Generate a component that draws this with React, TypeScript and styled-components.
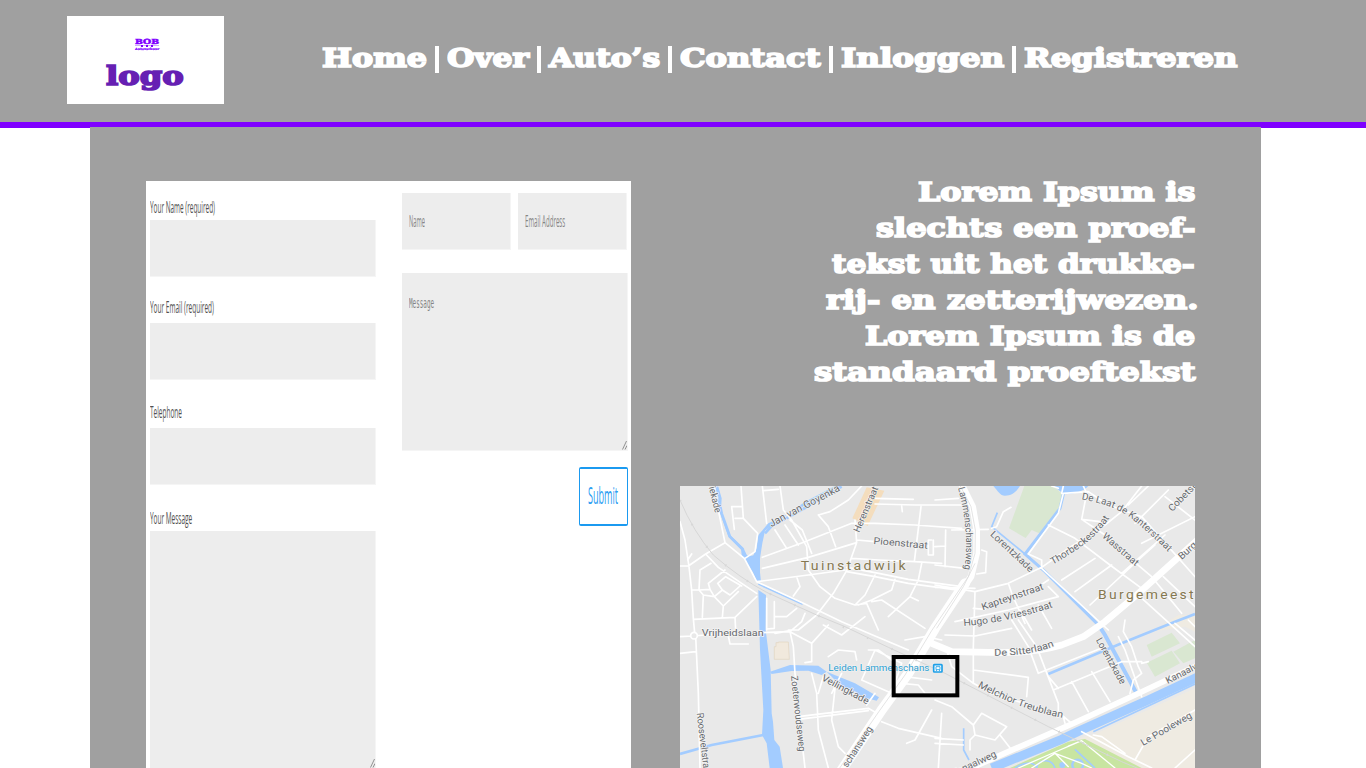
import React, { useLayoutEffect, useRef, useState } from "react";
import styled, { createGlobalStyle } from "styled-components";

const GlobalStyle = createGlobalStyle`
  * { box-sizing: border-box; }
  body { margin: 0; background: #fff; overflow: hidden; }
`;

const slab = `"Rockwell Extra Bold", "DejaVu Serif", serif`;

const Page = styled.div`
  height: 768px;
  overflow: hidden;
  display: flex;
  flex-direction: column;
  background: #fff;
`;

const Header = styled.header`
  flex: none;
  height: 128px;
  display: flex;
  align-items: flex-start;
  padding: 16px 0 0 67px;
  background: #a0a0a0;
  border-bottom: 6px solid #7f00ff;
`;

const Logo = styled.div`
  width: 157px;
  height: 88px;
  padding-top: 21px;
  display: flex;
  flex-direction: column;
  align-items: center;
  background: #fff;
  color: #7f00ff;
  font-family: ${slab};
  font-weight: bold;
`;

const LogoMark = styled.div`
  width: 24px;
  height: 22px;
  margin-left: 3px;
  font-size: 7px;
  line-height: 9px;
  -webkit-text-stroke: 0.5px #7f00ff;
`;

const LogoRule = styled.div`
  display: flex;
  justify-content: center;
  gap: 3px;
  height: 2px;
  margin-top: -1px;
  background: linear-gradient(#cfa8ff, #cfa8ff) 0 0 / 100% 1px no-repeat;
  i { width: 2px; height: 2px; background: #7f00ff; }
`;

const LogoTag = styled.div`
  height: 4px;
  font-size: 3px;
  line-height: 4px;
  -webkit-text-stroke: 0.2px #7f00ff;
`;

const LogoWord = styled.div`
  height: 36px;
  margin: -1px 1px 0 0;
  font-size: 26px;
  line-height: 36px;
  color: #661fb3;
  -webkit-text-stroke: 1.7px #661fb3;
`;

const Nav = styled.nav`
  display: flex;
  gap: 8px;
  margin: 24px 0 0 98px;
  color: #fff;
  font: bold 26px/36px ${slab};
  -webkit-text-stroke: 1.7px #fff;
`;

const Divider = styled.i`
  width: 4px;
  height: 27px;
  margin-top: 6px;
  background: #fff;
`;

const Main = styled.main`
  flex: none;
  position: relative;
  width: 1171px;
  height: 900px;
  margin: -1px 0 0 90px;
  padding: 54px 66px 0 56px;
  display: flex;
  align-items: flex-start;
  justify-content: space-between;
  background: #a0a0a0;
`;

const FormCard = styled.form`
  width: 485px;
  height: 700px;
  padding: 0 3px 0 4px;
  display: flex;
  justify-content: space-between;
  background: #fff;
  font-family: "Open Sans", "Noto Sans", sans-serif;
`;

const Column = styled.div<{ $top: number }>`
  width: 226px;
  padding-top: ${(p) => p.$top}px;
`;

const Label = styled.div<{ $before?: number; $after: number }>`
  height: 22px;
  margin: ${(p) => p.$before ?? 0}px 0 ${(p) => p.$after}px;
  font-size: 16px;
  line-height: 22px;
  color: #505050;
`;

const Field = styled.div<{ $h?: number; $w?: number; $pad?: number }>`
  position: relative;
  width: ${(p) => (p.$w ? `${p.$w}px` : "100%")};
  height: ${(p) => p.$h ?? 57}px;
  padding: ${(p) => p.$pad ?? 17}px 7px 0;
  background: #ededed;
  border: solid #f5f5f5;
  border-width: 0 1px 1px 0;
  color: #858585;
  font-size: 16px;
  line-height: 22px;
`;

const Mono = styled.div`
  font: 14.5px/22px "DejaVu Sans Mono", monospace;
`;

const FieldRow = styled.div`
  display: flex;
  justify-content: space-between;
  margin: 0 1px 23px 0;
`;

const Grip = styled.svg`
  position: absolute;
  right: 0;
  bottom: 0;
  width: 5px;
  height: 10px;
`;

const Submit = styled.button`
  display: block;
  width: 49px;
  height: 59px;
  margin: 16px 0 0 auto;
  padding: 0 0 3px 8px;
  text-align: left;
  background: #fff;
  border: solid #1b9af0;
  border-width: 2px 1.5px;
  border-radius: 2px;
  color: #2b9df2;
  font: 23px/32px "Open Sans", "Noto Sans", sans-serif;
`;

const Side = styled.section`
  width: 515px;
`;

const Intro = styled.div`
  height: 305px;
  margin-top: -7.5px;
  margin-bottom: 7.5px;
  display: flex;
  flex-direction: column;
  align-items: flex-end;
  color: #fff;
  font: bold 26px/36px ${slab};
  -webkit-text-stroke: 1.7px #fff;
`;

const IntroLine = styled.div<{ $shift?: number }>`
  height: 36px;
  margin-right: ${(p) => -(p.$shift ?? 0)}px;
`;

const MapView = styled.svg`
  display: block;
  width: 515px;
  height: 282px;
`;

const FitBox = styled.span`
  display: block;
  white-space: nowrap;
`;

const FitText = styled.span`
  display: inline-block;
  transform-origin: 0 50%;
`;

/** Condenses or expands a run of text so that it spans a given width. */
function Fit({ width, children }: { width: number; children: React.ReactNode }) {
  const ref = useRef<HTMLSpanElement>(null);
  const [scale, setScale] = useState(1);
  useLayoutEffect(() => {
    if (ref.current) setScale(width / ref.current.offsetWidth);
  }, [width]);
  return (
    <FitBox style={{ width }}>
      <FitText ref={ref} style={{ transform: `scaleX(${scale})` }}>
        {children}
      </FitText>
    </FitBox>
  );
}

const navItems: [string, number][] = [
  ["Home", 105],
  ["Over", 82],
  ["Auto’s", 111],
  ["Contact", 141],
  ["Inloggen", 163],
  ["Registreren", 213],
];

const introLines: [string, number, number][] = [
  ["Lorem Ipsum is", 277, 0],
  ["slechts een proef-", 319, 0],
  ["tekst uit het drukke-", 363, 0],
  ["rij- en zetterijwezen.", 372, 3],
  ["Lorem Ipsum is de", 330, 0],
  ["standaard proeftekst", 381, 0],
];

const minorRoads = `
M15 125 L30 180 L42 260 L50 330 L55 415 L60 470 M15 258 L40 258 L92 222 L150 188 M38 240 L50 222
M118 18 L132 100 L150 188 L208 235 L245 305 M92 222 L130 262 L200 310 L245 340
M108 250 L75 270 L72 330 L85 345 L82 412 M72 330 L50 330 M72 330 L105 328 L100 310 L150 270 M105 328 L118 350 L85 345
M118 350 L142 330 L128 310 L152 290 L200 318 M142 330 L165 345 L195 318 M118 350 L145 378 L142 412 M145 378 L190 335
M55 418 L180 412 L245 350 M180 412 L182 450
M198 18 L205 115 L248 160 L240 215 L210 235 M170 80 L200 80 M170 80 L178 148 M180 115 L205 115
M262 18 L275 130 M265 32 L310 28 M315 18 L325 90 L350 120 L395 200 L400 270 L435 320 L480 355 L540 375
M300 150 L335 205 M330 135 L370 195 M345 120 L382 150 L410 220 M262 232 L382 188 L530 130 L600 130
M262 265 L400 232 L545 188 M245 305 L400 285 L510 270 M430 105 L465 95 L520 60 L560 18
M430 105 L460 140 L482 200 M545 188 L540 120 M545 188 L515 272 L475 340 L425 405 L370 450 L340 450
M545 180 L600 185 M770 180 L760 180 L760 225 L775 225 L775 180 M530 235 L610 240 L720 245 L800 250
M600 55 L715 58 M600 72 L720 75 L860 75 M680 78 L682 95 M738 80 L718 245 M600 130 L720 135 L860 145
M515 262 L600 278 L700 298 L860 320 M515 275 L600 290 L700 310 L860 332
M600 285 L570 345 L540 375 L575 370 L610 450 M660 298 L650 330 L590 360 L550 375 M740 250 L730 300 L705 350 L640 410 M705 350 L730 362
M590 365 L620 360 L750 445 M365 290 L375 320 L355 348 M245 305 L385 370 L500 425 L600 468 L700 510
M275 355 L275 450 M298 365 L298 445 L275 447 M300 410 L335 410 L365 385
M830 150 L940 148 M812 150 L810 260 M780 255 L870 265 M920 210 L935 215 L932 278 L905 282 M780 200 L812 198
M1165 40 L1240 35 L1300 75 L1400 110 L1560 290 M1165 40 L1150 100 L1060 222 L1100 240 L1100 265 L1300 450
M1225 18 L1235 40 L1220 118 L1290 165 L1330 205 L1430 290 L1520 400 M1220 118 L1275 125
M1120 135 L1200 175 L1305 255 L1400 325 M780 60 L850 55 M950 145 L965 140 L985 95 L1008 82
M780 315 L900 335 L1000 310 L1100 262 L1180 205 L1290 135 L1340 95 L1400 18 M780 322 L900 325
M1000 310 L1012 345 L1050 430 M900 335 L895 500 L895 610 M1060 340 L1120 300 M1012 345 L1060 340
M840 425 L1000 390 L1150 350 M1150 350 L1120 320 M930 388 L895 385 M1090 375 L1130 445 M1035 390 L1070 450
M1160 300 L1260 235 M1200 335 L1310 255 M1245 375 L1390 240 L1440 195 M1340 280 L1470 165 M1360 75 L1420 18 M1380 130 L1480 30 M1400 190 L1560 110 M1470 50 L1560 120
M1465 290 L1560 380 M1395 350 L1560 500 M810 465 L900 468 L1010 445 M1030 420 L1085 500 L1150 670 L1150 710
M895 570 L1060 592 L1055 650 M1150 25 L1130 18 M1010 420 L1060 500 L1090 580 L1290 500
M1135 630 L1340 545 L1400 545 M1120 590 L1150 625 M1190 605 L1240 695 M1250 575 L1305 665 M1330 470 L1350 510 L1400 650
M1350 420 L1345 455 L1370 500 L1390 560 L1400 580 L1375 600 L1365 640 M1400 550 L1420 545
M15 470 L55 468 L125 462 L250 458 L345 455 L380 425 L390 400 M62 468 L70 640 L75 864 M15 520 L62 515 M160 468 L165 492 L220 492
M345 455 L355 500 L360 580 L370 690 L390 864 M345 455 L410 490 L410 545 L390 548 M410 490 L460 435 M300 460 L345 452
M460 530 L490 510 L540 515 L545 540 M445 435 L500 465 L570 410 M410 580 L425 640 L430 750 L460 864 M430 640 L445 590
M470 640 L500 580 M480 625 L470 720 L490 800 L510 820 M370 710 L450 700 L580 685 L615 705 M370 718 L580 692
M580 510 L610 510 L650 540 M560 600 L600 510 L680 550 L650 640 L560 600 M575 675 L600 640
M620 725 L670 745 L800 775 M695 790 L720 780 L770 690 M680 610 L730 615 L750 640 L830 640 M690 590 L770 600
M780 660 L830 680 L895 735 L920 700 L995 740 L960 780 L900 765 L895 735 M975 765 L1010 810 M900 765 L885 780 L885 810 M800 700 L790 864 M780 775 L865 780 M780 790 L865 795
M690 480 L750 470 L800 480 M815 510 L830 560 L895 610 L950 640 L1160 705 L1190 730 M1165 710 L1170 730 M1160 40 L1165 18
M1380 840 L1420 770 L1560 690 M1220 755 L1360 830 L1430 864 M1255 765 L1280 770 L1350 820 M1500 864 L1560 810 M1500 430 L1560 480 M1540 420 L1560 440
`;

function CityMap() {
  const label = { fontFamily: "Roboto, sans-serif", fill: "#66696d", stroke: "#f4f4f4", strokeWidth: 4, paintOrder: "stroke" as const };
  const street = (text: string, x: number, y: number, angle: number, length: number) => (
    <text key={text + x} x={0} y={0} fontSize={29} textLength={length} lengthAdjust="spacingAndGlyphs" transform={`translate(${x} ${y}) rotate(${angle})`}>
      {text}
    </text>
  );
  return (
    <MapView viewBox="15 18 1545 846" preserveAspectRatio="none">
      <rect x="0" y="0" width="1600" height="900" fill="#e9e9e9" />
      <path fill="#efebe2" d="M1560 625L1260 762L1210 775L1400 864H1560ZM1430 455L1510 405H1560V455L1530 440Z" />
      <path fill="#d9e7d1" d="M1048 18H1135L1165 45L1155 75L1105 165L1070 150L1052 174L1002 145ZM1415 495L1490 458L1515 490L1430 530ZM1495 515L1560 480V535L1525 550ZM1415 548L1490 512L1515 550L1440 590Z" />
      <path fill="#c8e5a1" d="M1005 864L1180 785L1230 777L1400 864Z" />
      <path fill="#f4ddbd" d="M575 22L628 32L578 138L532 115Z" />
      <path fill="#f1e9dd" stroke="#e3d5bf" strokeWidth="2" d="M303 488H310V486H340L343 538H298V500H303Z" />
      <g fill="#a3ccff">
        <path d="M118 18L130 20L140 55L138 90L165 165L205 203L218 230L235 226L245 205L250 165L280 130L380 82L450 40L500 18H480L390 65L285 140L270 152L262 190L255 235L255 300L246 305L235 278L200 225L198 208L160 170L130 85L130 50Z" />
        <path d="M212 226L250 230L258 305H246L235 278Z" />
        <path d="M250 330L273 345L272 450L287 570L290 700L294 725L298 780L314 800L324 864H284L275 790L261 765L265 690L255 510Z" />
        <path d="M285 575L345 555L430 557L455 575L440 585L400 572L350 573L290 582ZM455 575L540 610L612 652L605 662L570 653L500 620Z" />
        <path d="M955 18H1035C1022 38 1010 47 990 47C975 47 970 34 955 18ZM1135 18H1240C1225 35 1195 42 1167 43Z" />
      </g>
      <g fill="none" stroke="#a3ccff">
        <path strokeWidth="8" d="M15 822L110 795L265 765" />
        <path strokeWidth="8" d="M270 160L290 138L380 90L450 48L500 20M132 60L140 100L165 170L205 210" />
        <path strokeWidth="5" d="M250 312L310 340L383 373M866 745V810L882 840M967 98L950 140L1050 222M1255 755L1560 612" />
        <path strokeWidth="9" d="M1167 35L1155 85L1050 222L1110 275L1275 440" />
        <path strokeWidth="12" d="M1272 437L1290 465L1382 635" />
        <path strokeWidth="8" d="M1560 402L1500 425L1340 490L1120 582" />
        <path strokeWidth="27" d="M1570 590L1420 660L1210 754L1160 778L950 864" />
        <path strokeWidth="5" d="M1020 864C1060 840 1080 850 1085 864M1085 864C1090 835 1130 835 1140 864M1200 808L1260 864" />
        <circle cx="1208" cy="855" r="16" strokeWidth="7" />
      </g>
      <circle cx="1162" cy="855" r="9" fill="#a3ccff" />
      <g fill="none" stroke="#fff" strokeLinecap="round" strokeLinejoin="round">
        <path strokeWidth="5" d={minorRoads} />
        <path strokeWidth="20" d="M1570 178L1385 345L1290 425L1225 470L1160 495Q1080 518 980 518L830 515L770 490" />
        <path strokeWidth="17" d="M1570 555L1380 645L1200 728L1000 815L880 868" />
        <path strokeWidth="20" d="M858 10L893 80L905 150L905 220L888 290L840 360L790 435" />
        <path strokeWidth="30" d="M870 310L780 445L700 580L620 690L500 870" />
        <path strokeWidth="4" d="M1030 864L1120 825L1220 782M1070 864L1140 820L1180 860M1140 820L1220 850L1250 864M1180 798L1220 782L1320 864" />
      </g>
      <circle cx="57" cy="467" r="10" fill="#e9e9e9" stroke="#fff" strokeWidth="5" />
      <g fill="none" stroke="#d7d7d7" strokeWidth="2">
        <path d="M856 18L888 80L901 150L900 220L880 290L770 452L690 585L615 690L490 870M900 250L865 320L785 445" />
        <path strokeWidth="3" d="M15 60Q55 155 115 225Q195 295 275 337L425 405L510 440L640 502L740 548L810 580L1120 740L1340 845L1400 870" />
        <path strokeWidth="7" strokeDasharray="4 76" d="M15 60Q55 155 115 225Q195 295 275 337L425 405L640 502L810 580L1120 740L1340 845" />
      </g>
      <g {...label}>
        {street("iekade", 101, 22, 76, 80)}
        <path id="goyenkade" d="M290 142Q350 108 420 72T515 18" fill="none" stroke="none" />
        <text fontSize="31"><textPath href="#goyenkade" textLength="235" lengthAdjust="spacingAndGlyphs">Jan van Goyenka</textPath></text>
        {street("Herenstraat", 553, 159, -67, 146)}
        {street("Pioenstraat", 595, 192, 5, 163)}
        <path id="lammen" d="M849 24Q868 90 872 160T867 270" fill="none" stroke="none" />
        <text fontSize="29"><textPath href="#lammen" textLength="246" lengthAdjust="spacingAndGlyphs">Lammenschansweg</textPath></text>
        {street("Lorentzkade", 944, 165, 43, 165)}
        <path id="kanter" d="M1219 58Q1320 75 1375 120T1485 221" fill="none" stroke="none" />
        <text fontSize="29"><textPath href="#kanter" textLength="312" lengthAdjust="spacingAndGlyphs">De Laat de Kanterstraat</textPath></text>
        <path id="thorbecke" d="M1133 254Q1220 205 1260 165T1305 108" fill="none" stroke="none" />
        <text fontSize="29"><textPath href="#thorbecke" textLength="223" lengthAdjust="spacingAndGlyphs">Thorbeckestraat</textPath></text>
        {street("Wasstraat", 1280, 171, 41, 134)}
        {street("Cobetstr", 1492, 96, -46, 115)}
        {street("Burg", 1520, 240, -42, 63)}
        {street("Kapteynstraat", 923, 391, -19, 195)}
        <path id="vries" d="M866 438Q990 430 1138 380" fill="none" stroke="none" />
        <text fontSize="29"><textPath href="#vries" textLength="275" lengthAdjust="spacingAndGlyphs">Hugo de Vriesstraat</textPath></text>
        {street("Vrijheidslaan", 80, 467, 0, 186)}
        {street("Zoeterwoudseweg", 348, 588, 84, 228)}
        {street("Veilingkade", 438, 600, 28, 156)}
        {street("Rooseveltstraat", 65, 700, 83, 190)}
        {street("schansweg", 517, 864, -57, 140)}
        <path id="sitter" d="M958 527Q1070 528 1140 497" fill="none" stroke="none" />
        <text fontSize="29"><textPath href="#sitter" textLength="183" lengthAdjust="spacingAndGlyphs">De Sitterlaan</textPath></text>
        <path id="treub" d="M908 620Q960 650 1030 676T1163 714" fill="none" stroke="none" />
        <text fontSize="29"><textPath href="#treub" textLength="272" lengthAdjust="spacingAndGlyphs">Melchior Treublaan</textPath></text>
        {street("Lorentzkade", 1262, 480, 61, 154)}
        {street("Kanaalw", 1478, 612, -27, 110)}
        {street("Le Pooleweg", 1404, 798, -30, 172)}
        {street("Kanaalweg", 835, 890, -25, 145)}
      </g>
      <g fontFamily="Roboto, sans-serif" fontSize="36" fill="#857850" stroke="#f4f4f4" strokeWidth="4" paintOrder="stroke" letterSpacing="6">
        <text x="377" y="269" textLength="322" lengthAdjust="spacingAndGlyphs">Tuinstadwijk</text>
        <text x="1269" y="357" textLength="294" lengthAdjust="spacingAndGlyphs">Burgemeest</text>
      </g>
      <text x="460" y="572" fontFamily="Roboto, sans-serif" fontSize="26" fill="#2ba0d2" stroke="#f4f4f4" strokeWidth="3" paintOrder="stroke" textLength="303" lengthAdjust="spacingAndGlyphs">Leiden Lammenschans</text>
      <rect x="776" y="554" width="25" height="22" rx="2" fill="#fff" stroke="#1ea0e8" strokeWidth="5" />
      <path fill="none" stroke="#1ea0e8" strokeWidth="2.5" d="M783 560H795V569H783ZM783 574L785 570M795 574L793 570" />
      <rect x="656" y="531" width="191" height="115" fill="none" stroke="#000" strokeWidth="12" />
    </MapView>
  );
}

const ResizeGrip = () => (
  <Grip viewBox="0 0 5 10">
    <path d="M.5 9.5L4.5 1M3 9.5L5 5.5" fill="none" stroke="#888" strokeWidth=".9" />
  </Grip>
);

export default function App() {
  return (
    <>
      <GlobalStyle />
      <Page>
        <Header>
          <Logo>
            <LogoMark>
              <Fit width={24}>BOB</Fit>
              <LogoRule><i /><i /><i /></LogoRule>
              <LogoTag><Fit width={24}>Autoverhuur</Fit></LogoTag>
            </LogoMark>
            <LogoWord><Fit width={78}>logo</Fit></LogoWord>
          </Logo>
          <Nav>
            {navItems.map(([name, width], i) => (
              <React.Fragment key={name}>
                {i > 0 && <Divider />}
                <Fit width={width}>{name}</Fit>
              </React.Fragment>
            ))}
          </Nav>
        </Header>
        <Main>
          <FormCard>
            <Column $top={15}>
              <Label $after={2}><Fit width={65}>Your Name (required)</Fit></Label>
              <Field />
              <Label $before={19} $after={5}><Fit width={64}>Your Email (required)</Fit></Label>
              <Field />
              <Label $before={21} $after={5}><Fit width={32}>Telephone</Fit></Label>
              <Field />
              <Label $before={22} $after={2}><Fit width={42}>Your Message</Fit></Label>
              <Field $h={238}><ResizeGrip /></Field>
            </Column>
            <Column $top={12}>
              <FieldRow>
                <Field $w={109}><Fit width={16}>Name</Fit></Field>
                <Field $w={109}><Fit width={40}>Email Address</Fit></Field>
              </FieldRow>
              <Field $h={178} $pad={19}>
                <Mono><Fit width={25}>Message</Fit></Mono>
                <ResizeGrip />
              </Field>
              <Submit type="button"><Fit width={30}>Submit</Fit></Submit>
            </Column>
          </FormCard>
          <Side>
            <Intro>
              {introLines.map(([text, width, shift]) => (
                <IntroLine key={text} $shift={shift}>
                  <Fit width={width}>{text}</Fit>
                </IntroLine>
              ))}
            </Intro>
            <CityMap />
          </Side>
        </Main>
      </Page>
    </>
  );
}
